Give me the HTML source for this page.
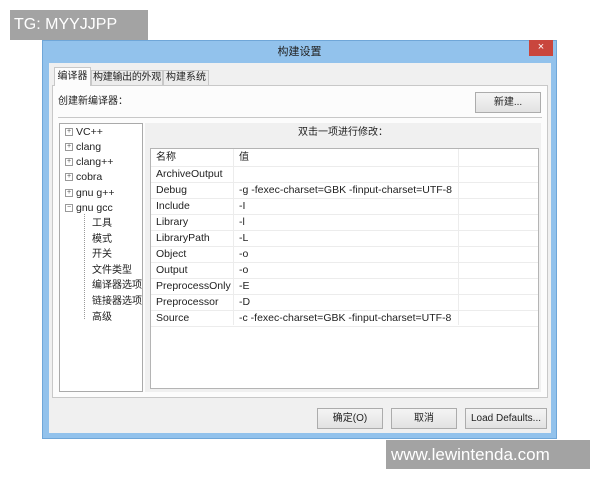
<!DOCTYPE html>
<html><head><meta charset="utf-8"><style>
*{margin:0;padding:0;box-sizing:border-box}
body{width:600px;height:480px;background:#fff;position:relative;overflow:hidden;font-family:"Liberation Sans","Noto Sans CJK SC",sans-serif;font-size:10.5px;color:#222;white-space:nowrap}
.a{position:absolute}
.btn{position:absolute;background:linear-gradient(#f4f4f4,#e2e2e2);border:1px solid #acacac;text-align:center;font-size:10px}
.row{position:absolute;left:0;width:387px;height:16px;border-bottom:1px solid #ececec;line-height:15px}
.row span{position:absolute}
.tr{position:absolute;left:5px;line-height:15px}
.pl{display:inline-block;width:8px;height:8px;border:1px solid #999;font-size:7px;line-height:6px;text-align:center;margin-right:3px;vertical-align:middle;color:#555}
.sub{position:absolute;left:32px;line-height:15px;font-size:10px}
</style></head><body>
<div class="a" style="left:10px;top:10px;width:138px;height:30px;background:#a3a3a3;color:#fff;font-size:16px;line-height:30px;padding-left:4px">TG: MYYJJPP</div>
<div class="a" style="left:42px;top:40px;width:515px;height:399px;background:#92c2ec;border:1px solid #6fa6d8"></div>
<div class="a" style="left:42px;top:42px;width:515px;text-align:center;font-size:11px;line-height:20px">构建设置</div>
<div class="a" style="left:529px;top:40px;width:24px;height:16px;background:#c9463d;color:#fff;text-align:center;line-height:15px;font-size:11px">×</div>
<div class="a" style="left:49px;top:63px;width:502px;height:370px;background:#f0f0f0"></div>
<div class="a" style="left:52px;top:85px;width:496px;height:313px;background:#fcfcfc;border:1px solid #c8c8c8"></div>
<div class="a" style="left:54px;top:67px;width:37px;height:19px;background:#fcfcfc;border:1px solid #c8c8c8;border-bottom:none;line-height:17px;text-align:center;font-size:10px">编译器</div>
<div class="a" style="left:91px;top:70px;width:72px;height:15px;background:#ececec;border:1px solid #c8c8c8;border-bottom:none;line-height:14px;text-align:center;font-size:10px;letter-spacing:-0.3px">构建输出的外观</div>
<div class="a" style="left:163px;top:70px;width:46px;height:15px;background:#ececec;border:1px solid #c8c8c8;border-bottom:none;line-height:14px;text-align:center;font-size:10px">构建系统</div>
<div class="a" style="left:58px;top:95px;line-height:14px;font-size:10px">创建新编译器：</div>
<div class="btn" style="left:475px;top:92px;width:66px;height:21px;line-height:19px">新建...</div>
<div class="a" style="left:58px;top:117px;width:484px;height:1px;background:#c8c8c8"></div>
<div class="a" style="left:59px;top:123px;width:84px;height:269px;background:#fff;border:1px solid #aaa">
<div class="tr" style="top:1px"><span class="pl">+</span>VC++</div>
<div class="tr" style="top:16px"><span class="pl">+</span>clang</div>
<div class="tr" style="top:31px"><span class="pl">+</span>clang++</div>
<div class="tr" style="top:46px"><span class="pl">+</span>cobra</div>
<div class="tr" style="top:62px"><span class="pl">+</span>gnu g++</div>
<div class="tr" style="top:77px"><span class="pl">−</span>gnu gcc</div>
<div class="a" style="left:24px;top:90px;width:1px;height:105px;border-left:1px dotted #999"></div>
<div class="sub" style="top:92px">工具</div><div class="sub" style="top:108px">模式</div><div class="sub" style="top:123px">开关</div><div class="sub" style="top:139px">文件类型</div><div class="sub" style="top:154px">编译器选项</div><div class="sub" style="top:170px">链接器选项</div><div class="sub" style="top:186px">高级</div>
</div>
<div class="a" style="left:145px;top:123px;width:396px;height:269px;background:#f0f0f0"></div>
<div class="a" style="left:145px;top:126px;width:396px;text-align:center;line-height:14px;font-size:10px">双击一项进行修改：</div>
<div class="a" style="left:150px;top:148px;width:389px;height:241px;background:#fff;border:1px solid #b4b4b4">
<div class="a" style="left:82px;top:0;width:1px;height:176px;background:#ececec"></div>
<div class="a" style="left:307px;top:0;width:1px;height:176px;background:#ececec"></div>
<div class="row" style="top:0;height:18px;line-height:17px"><span style="left:5px;font-size:10px">名称</span><span style="left:88px;font-size:10px">值</span></div>
<div class="row" style="top:18px"><span style="left:5px">ArchiveOutput</span></div>
<div class="row" style="top:34px"><span style="left:5px">Debug</span><span style="left:88px">-g -fexec-charset=GBK -finput-charset=UTF-8</span></div>
<div class="row" style="top:50px"><span style="left:5px">Include</span><span style="left:88px">-I</span></div>
<div class="row" style="top:66px"><span style="left:5px">Library</span><span style="left:88px">-l</span></div>
<div class="row" style="top:82px"><span style="left:5px">LibraryPath</span><span style="left:88px">-L</span></div>
<div class="row" style="top:98px"><span style="left:5px">Object</span><span style="left:88px">-o</span></div>
<div class="row" style="top:114px"><span style="left:5px">Output</span><span style="left:88px">-o</span></div>
<div class="row" style="top:130px"><span style="left:5px">PreprocessOnly</span><span style="left:88px">-E</span></div>
<div class="row" style="top:146px"><span style="left:5px">Preprocessor</span><span style="left:88px">-D</span></div>
<div class="row" style="top:162px"><span style="left:5px">Source</span><span style="left:88px">-c -fexec-charset=GBK -finput-charset=UTF-8</span></div>
</div>
<div class="btn" style="left:317px;top:408px;width:66px;height:21px;line-height:19px">确定(O)</div>
<div class="btn" style="left:391px;top:408px;width:66px;height:21px;line-height:19px">取消</div>
<div class="btn" style="left:465px;top:408px;width:82px;height:21px;line-height:19px">Load Defaults...</div>
<div class="a" style="left:386px;top:440px;width:204px;height:29px;background:#a3a3a3;color:#fff;font-size:17px;line-height:29px;padding-left:5px">www.lewintenda.com</div>
</body></html>
